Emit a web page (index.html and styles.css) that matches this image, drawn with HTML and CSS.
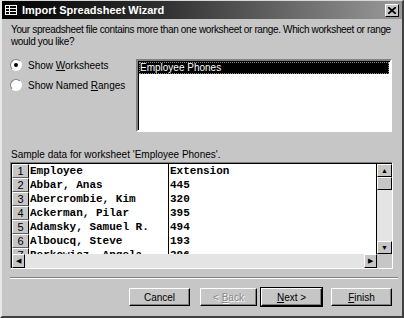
FILE: index.html
```html
<!DOCTYPE html>
<html lang="en">
<head>
    <meta charset="UTF-8">
    <title>Import Spreadsheet Wizard</title>
    <link rel="stylesheet" href="styles.css">
</head>
<body>
    <div class="window">
        <div class="titlebar">
            <svg class="app-icon" width="12" height="10" viewBox="0 0 12 10">
                <rect x="0.5" y="0.5" width="11" height="9" fill="none" stroke="#fff"/>
                <line x1="0" y1="3.5" x2="12" y2="3.5" stroke="#fff"/>
                <line x1="0" y1="6.5" x2="12" y2="6.5" stroke="#fff"/>
                <line x1="4.5" y1="0" x2="4.5" y2="10" stroke="#fff"/>
            </svg>
            <span class="title">Import Spreadsheet Wizard</span>
            <div class="close-btn">
                <svg width="8" height="7" viewBox="0 0 8 7">
                    <path d="M0 0 L8 7 M8 0 L0 7" stroke="#000" stroke-width="1.8"/>
                </svg>
            </div>
        </div>

        <div class="content">
            <p class="intro">Your spreadsheet file contains more than one worksheet or range. Which worksheet or range would you like?</p>

            <div class="choice-row">
                <div class="options">
                    <label class="radio-line"><span class="radio checked"></span><span>Show <u>W</u>orksheets</span></label>
                    <label class="radio-line"><span class="radio"></span><span>Show Named <u>R</u>anges</span></label>
                </div>
                <div class="listbox">
                    <div class="list-item selected">Employee Phones</div>
                </div>
            </div>

            <p class="sample-label">Sample data for worksheet 'Employee Phones'.</p>

            <div class="grid-box">
                <div class="grid-main">
                    <div class="grid-rows">
                        <div class="grid-row"><span class="row-num">1</span><span class="cell name">Employee</span><span class="cell">Extension</span></div>
                        <div class="grid-row"><span class="row-num">2</span><span class="cell name">Abbar, Anas</span><span class="cell">445</span></div>
                        <div class="grid-row"><span class="row-num">3</span><span class="cell name">Abercrombie, Kim</span><span class="cell">320</span></div>
                        <div class="grid-row"><span class="row-num">4</span><span class="cell name">Ackerman, Pilar</span><span class="cell">395</span></div>
                        <div class="grid-row"><span class="row-num">5</span><span class="cell name">Adamsky, Samuel R.</span><span class="cell">494</span></div>
                        <div class="grid-row"><span class="row-num">6</span><span class="cell name">Alboucq, Steve</span><span class="cell">193</span></div>
                        <div class="grid-row"><span class="row-num">7</span><span class="cell name">Berkowicz, Angela</span><span class="cell">396</span></div>
                    </div>
                    <div class="vscroll">
                        <div class="sb-btn">&#9650;</div>
                        <div class="sb-thumb"></div>
                        <div class="sb-track"></div>
                        <div class="sb-btn">&#9660;</div>
                    </div>
                </div>
                <div class="hscroll">
                    <div class="sb-btn sb-h">&#9664;</div>
                    <div class="sb-track"></div>
                    <div class="sb-btn sb-h">&#9654;</div>
                    <div class="sb-corner"></div>
                </div>
            </div>

            <div class="separator"></div>

            <div class="buttons">
                <button class="btn">Cancel</button>
                <button class="btn disabled">&lt; <u>B</u>ack</button>
                <button class="btn default"><u>N</u>ext &gt;</button>
                <button class="btn finish"><u>F</u>inish</button>
            </div>
        </div>
    </div>
</body>
</html>
```

FILE: styles.css
```css
* {
    box-sizing: border-box;
}
body {
    margin: 0;
    font-family: "Liberation Sans", Arial, sans-serif;
    font-size: 10px;
    color: #000;
}
.window {
    width: 404px;
    height: 318px;
    background: #c6c6c6;
    border-top: 1px solid #d8d8d8;
    border-left: 2px solid #e8e8e8;
    border-right: 2px solid #404040;
    border-bottom: 2px solid #404040;
    display: flex;
    flex-direction: column;
}
.titlebar {
    height: 18px;
    background: linear-gradient(to right, #000 0%, #303030 40%, #9a9a9a 100%);
    display: flex;
    align-items: center;
    padding: 0 3px;
}
.app-icon {
    margin-right: 5px;
}
.title {
    color: #fff;
    font-weight: bold;
    font-size: 11px;
    flex: 1;
}
.close-btn {
    width: 14px;
    height: 13px;
    background: #c6c6c6;
    border-top: 1px solid #fff;
    border-left: 1px solid #fff;
    border-right: 1px solid #000;
    border-bottom: 1px solid #000;
    display: flex;
    align-items: center;
    justify-content: center;
}
.content {
    padding: 5px 8px 0 8px;
}
.intro {
    margin: 0 -4px 0 0;
    line-height: 12px;
    padding-left: 1px;
    letter-spacing: -0.35px;
}
.choice-row {
    display: flex;
    margin-top: 11px;
}
.options {
    width: 126px;
}
.radio-line {
    display: flex;
    align-items: center;
    height: 12px;
    margin-bottom: 8px;
}
.radio {
    width: 12px;
    height: 12px;
    border-radius: 50%;
    background: #fff;
    border: 1px solid;
    border-color: #808080 #fff #fff #808080;
    margin: 0 6px 0 0;
    position: relative;
}
.radio.checked::after {
    content: "";
    position: absolute;
    left: 3px;
    top: 3px;
    width: 4px;
    height: 4px;
    border-radius: 50%;
    background: #000;
}
.listbox {
    width: 256px;
    height: 73px;
    background: #fff;
    border: 2px solid;
    border-color: #808080 #fff #fff #808080;
    box-shadow: inset 1px 1px 0 #000;
    padding: 1px 1px 0 1px;
}
.list-item {
    height: 12px;
    line-height: 11px;
    padding-left: 1px;
}
.list-item.selected {
    background: #000;
    color: #fff;
    outline: 1px dotted #888;
    outline-offset: -1px;
}
.sample-label {
    margin: 17px 0 1px 1px;
    line-height: 12px;
}
.grid-box {
    width: 383px;
    height: 107px;
    border: 1px solid;
    border-color: #808080 #fff #fff #808080;
    box-shadow: inset 1px 1px 0 #000;
    padding: 1px 0 0 1px;
    display: flex;
    flex-direction: column;
    background: #fff;
}
.grid-main {
    display: flex;
    height: 90px;
}
.grid-rows {
    flex: 1;
    overflow: hidden;
    border-right: 1px solid #000;
}
.grid-row {
    display: flex;
    height: 14px;
    font-family: "Liberation Mono", "Courier New", monospace;
    font-size: 11px;
    font-weight: bold;
    line-height: 14px;
}
.row-num {
    width: 17px;
    background: #c6c6c6;
    border-top: 1px solid #fff;
    border-left: 1px solid #fff;
    border-right: 1px solid #000;
    border-bottom: 1px solid #606060;
    text-align: center;
    line-height: 12px;
    font-weight: normal;
    font-family: "Liberation Sans", Arial, sans-serif;
    font-size: 11px;
}
.cell {
    padding-left: 1px;
}
.cell.name {
    width: 140px;
    border-right: 1px solid #000;
}
.vscroll {
    width: 15px;
    display: flex;
    flex-direction: column;
    background: #e4e4e4;
}
.sb-btn {
    width: 15px;
    height: 13px;
    background: #c6c6c6;
    border-top: 1px solid #fff;
    border-left: 1px solid #fff;
    border-right: 1px solid #000;
    border-bottom: 1px solid #000;
    font-size: 7px;
    line-height: 11px;
    text-align: center;
    color: #000;
}
.sb-thumb {
    height: 13px;
    background: #c6c6c6;
    border-top: 1px solid #fff;
    border-left: 1px solid #fff;
    border-right: 1px solid #000;
    border-bottom: 1px solid #000;
}
.sb-track {
    flex: 1;
    background: #e4e4e4;
}
.hscroll {
    display: flex;
    height: 14px;
    background: #e4e4e4;
}
.sb-btn.sb-h {
    width: 13px;
    height: 14px;
    line-height: 12px;
}
.sb-corner {
    width: 15px;
    background: #c6c6c6;
}
.separator {
    margin: 8px 0 0 0;
    border-top: 1px solid #808080;
    border-bottom: 1px solid #fff;
    width: 388px;
}
.buttons {
    display: flex;
    justify-content: flex-end;
    margin-top: 9px;
    padding-right: 2px;
}
.btn {
    width: 61px;
    height: 18px;
    background: #c6c6c6;
    font-family: "Liberation Sans", Arial, sans-serif;
    font-size: 10px;
    color: #000;
    border: 1px solid;
    border-color: #fff #000 #000 #fff;
    box-shadow: inset -1px -1px 0 #808080;
    padding: 0;
    margin-left: 9px;
}
.btn.disabled {
    width: 57px;
    color: #888;
    text-shadow: 1px 1px 0 #fff;
    margin-left: 10px;
}
.btn.default {
    outline: 1px solid #000;
    margin-left: 4px;
}
```
